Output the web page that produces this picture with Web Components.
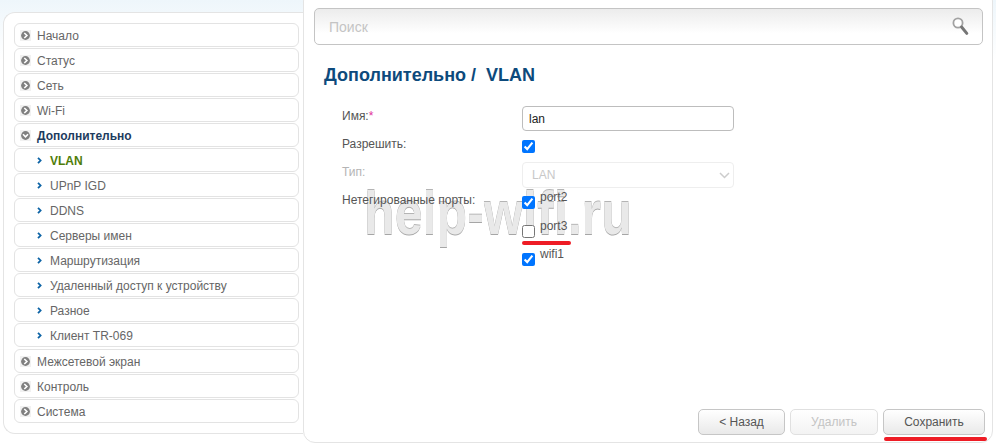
<!DOCTYPE html>
<html lang="ru">
<head>
<meta charset="utf-8">
<title>VLAN</title>
<style>
  html, body { margin: 0; height: 100%; }
  body {
    width: 996px;
    height: 448px;
    overflow: hidden;
    background: linear-gradient(180deg, #eef6fb 0, #ffffff 60px);
    font-family: "Liberation Sans", Arial, sans-serif;
  }
</style>
</head>
<body>
<router-page>
  <side-menu slot="menu">
    <menu-item icon="right">Начало</menu-item>
    <menu-item icon="right">Статус</menu-item>
    <menu-item icon="right">Сеть</menu-item>
    <menu-item icon="right">Wi-Fi</menu-item>
    <menu-item icon="down" open>Дополнительно</menu-item>
    <menu-item sub active>VLAN</menu-item>
    <menu-item sub>UPnP IGD</menu-item>
    <menu-item sub>DDNS</menu-item>
    <menu-item sub>Серверы имен</menu-item>
    <menu-item sub>Маршрутизация</menu-item>
    <menu-item sub>Удаленный доступ к устройству</menu-item>
    <menu-item sub>Разное</menu-item>
    <menu-item sub last>Клиент TR-069</menu-item>
    <menu-item icon="right">Межсетевой экран</menu-item>
    <menu-item icon="right">Контроль</menu-item>
    <menu-item icon="right">Система</menu-item>
  </side-menu>
  <main-panel slot="main">
    <search-box></search-box>
    <vlan-form></vlan-form>
    <action-bar></action-bar>
  </main-panel>
</router-page>

<script>
// общий каркас страницы
class RouterPage extends HTMLElement {
    constructor() {
        super();
        this.attachShadow({ mode: 'open' });
        this.shadowRoot.innerHTML = `
            <style>
                :host {
                    display: flex;
                    align-items: flex-start;
                    width: 996px;
                    height: 448px;
                    padding-left: 3px;
                    box-sizing: border-box;
                }
            </style>
            <slot name="menu"></slot>
            <slot name="main"></slot>
        `;
    }
}

class SideMenu extends HTMLElement {
    constructor() {
        super();
        this.attachShadow({ mode: 'open' });
        this.shadowRoot.innerHTML = `
            <style>
                :host {
                    display: flex;
                    flex-direction: column;
                    gap: 1px;
                    width: 300px;
                    height: 422px;
                    margin-top: 12px;
                    padding: 10px 4px 0 10px;
                    box-sizing: border-box;
                    background: #fff;
                    border: 1px solid #e4e4e4;
                    border-right: 0;
                    border-radius: 12px 0 0 12px;
                    flex: none;
                }
            </style>
            <slot></slot>
        `;
    }
}

class MenuItem extends HTMLElement {
    constructor() {
        super();
        this.attachShadow({ mode: 'open' });
    }

    connectedCallback() {
        const sub = this.hasAttribute('sub');
        const active = this.hasAttribute('active');
        const open = this.hasAttribute('open');
        const down = this.getAttribute('icon') === 'down';
        const color = active ? '#4f7d0a' : open ? '#1d3c5e' : '#666';
        const weight = active || open ? 'bold' : 'normal';
        const round = `
            <svg width="11" height="11" viewBox="0 0 11 11">
                <rect width="11" height="11" fill="#f1f1f1"/>
                <circle cx="5.5" cy="5.5" r="4.4" fill="#808080"/>
                <path d="${down ? 'M3 4.3 5.5 6.9 8 4.3' : 'M4.3 3 6.9 5.5 4.3 8'}" fill="none" stroke="#fff" stroke-width="1.6"/>
            </svg>`;
        const small = `
            <svg width="5" height="7" viewBox="0 0 5 7">
                <path d="M1 .8 3.6 3.5 1 6.2" fill="none" stroke="#0d63a5" stroke-width="1.8"/>
            </svg>`;
        this.shadowRoot.innerHTML = `
            <style>
                :host {
                    display: flex;
                    align-items: center;
                    height: 24px;
                    box-sizing: border-box;
                    padding: 1px 0 0 ${sub ? '22px' : '5px'};
                    margin-bottom: ${this.hasAttribute('last') ? '1px' : '0'};
                    background: #fff;
                    border: 1px solid #e3e3e3;
                    border-radius: 6px;
                    font: ${weight} 12px "Liberation Sans", Arial, sans-serif;
                    color: ${color};
                }
                svg { flex: none; }
                span { margin-left: ${sub ? '8px' : '6px'}; }
            </style>
            ${sub ? small : round}
            <span><slot></slot></span>
        `;
    }
}

class MainPanel extends HTMLElement {
    constructor() {
        super();
        this.attachShadow({ mode: 'open' });
        this.shadowRoot.innerHTML = `
            <style>
                :host {
                    display: flex;
                    flex-direction: column;
                    width: 690px;
                    height: 454px;
                    margin-top: -11px;
                    padding: 18px 9px 0 10px;
                    box-sizing: border-box;
                    background: #fff;
                    border: 1px solid #e4e4e4;
                    border-radius: 12px;
                    flex: none;
                    position: relative;
                }
            </style>
            <slot></slot>
        `;
    }
}

class SearchBox extends HTMLElement {
    constructor() {
        super();
        this.attachShadow({ mode: 'open' });
        this.shadowRoot.innerHTML = `
            <style>
                :host {
                    display: flex;
                    align-items: center;
                    justify-content: space-between;
                    height: 37px;
                    box-sizing: border-box;
                    padding: 0 13px 0 14px;
                    background: linear-gradient(180deg, #ececec 0, #fff 70%);
                    border: 1px solid #c4c4c4;
                    border-radius: 5px;
                    font: 14px "Liberation Sans", Arial, sans-serif;
                    color: #c4c4c4;
                }
            </style>
            <span>Поиск</span>
            <svg width="17" height="19" viewBox="0 0 17 19">
                <circle cx="6" cy="6" r="4.6" fill="#fff" stroke="#a2a2a2" stroke-width="1.8"/>
                <path d="M9.6 10 14.8 16.4" stroke="#767676" stroke-width="3" stroke-linecap="round"/>
            </svg>
        `;
    }
}

class VlanForm extends HTMLElement {
    constructor() {
        super();
        this.attachShadow({ mode: 'open' });
        this.shadowRoot.innerHTML = `
            <style>
                :host {
                    display: block;
                    position: relative;
                    font: 12px "Liberation Sans", Arial, sans-serif;
                    color: #555;
                }
                h1 {
                    margin: 0;
                    padding: 19px 0 0 10px;
                    font: bold 18px/22px "Liberation Sans", Arial, sans-serif;
                    color: #0d4a7c;
                    white-space: pre;
                }
                .grid {
                    position: relative;
                    display: grid;
                    grid-template-columns: 180px 212px;
                    grid-template-rows: 25px 31px 26px auto;
                    margin: 20px 0 0 28px;
                }
                label { line-height: 14px; }
                .l1, .l3 { padding-top: 3px; }
                .l2 { padding-top: 6px; }
                .l4 { padding-top: 5px; }
                .star { color: #e0309a; }
                .off { color: #b4b4b4; }
                .input {
                    display: flex;
                    align-items: center;
                    height: 25px;
                    box-sizing: border-box;
                    padding-left: 6px;
                    border: 1px solid #bdbdbd;
                    border-radius: 4px;
                    color: #222;
                }
                .select {
                    display: flex;
                    align-items: center;
                    justify-content: space-between;
                    height: 26px;
                    box-sizing: border-box;
                    padding: 0 3px 0 9px;
                    border: 1px solid #eee;
                    border-radius: 4px;
                    color: #c8c8c8;
                }
                input {
                    width: 13px;
                    height: 13px;
                    margin: 0;
                    accent-color: #0075ff;
                    display: block;
                }
                .allow { padding-top: 9px; }
                .port { position: relative; height: 28.5px; }
                .port input { position: absolute; left: 0; top: 8px; }
                .port span { position: absolute; left: 18px; top: 2px; }
                .wm {
                    position: absolute;
                    left: 50px;
                    top: 133px;
                    font: bold 62px/70px "Liberation Sans", Arial, sans-serif;
                    transform: scaleX(.81);
                    transform-origin: left top;
                    color: #e9e9e9;
                    text-shadow: 0 1px 0 #a6a6a6, 0 -1px 0 #b4b4b4;
                    white-space: nowrap;
                    pointer-events: none;
                }
                .mark {
                    position: absolute;
                    left: 208px;
                    top: 196px;
                    width: 49px;
                    height: 4px;
                    border-radius: 2px;
                    background: #ee1c25;
                }
            </style>
            <h1>Дополнительно /  VLAN</h1>
            <div class="wm">help-wifi.ru</div>
            <div class="grid">
                <label class="l1">Имя:<span class="star">*</span></label>
                <div class="input">lan</div>
                <label class="l2">Разрешить:</label>
                <div class="allow"><input type="checkbox" checked></div>
                <label class="l3 off">Тип:</label>
                <div class="select">LAN
                    <svg width="11" height="7" viewBox="0 0 11 7"><path d="M1 1 5.5 5.5 10 1" fill="none" stroke="#ccc" stroke-width="1.5"/></svg>
                </div>
                <label class="l4">Нетегированные порты:</label>
                <div>
                    <div class="port"><input type="checkbox" checked><span>port2</span></div>
                    <div class="port"><input type="checkbox"><span>port3</span></div>
                    <div class="port"><input type="checkbox" checked><span>wifi1</span></div>
                </div>
            </div>
            <div class="mark"></div>
        `;
    }
}

class ActionBar extends HTMLElement {
    constructor() {
        super();
        this.attachShadow({ mode: 'open' });
        this.shadowRoot.innerHTML = `
            <style>
                :host {
                    position: absolute;
                    right: 7px;
                    top: 419px;
                    display: flex;
                    gap: 5px;
                    font: 12px "Liberation Sans", Arial, sans-serif;
                }
                button {
                    height: 26px;
                    padding: 0;
                    background: linear-gradient(180deg, #fff 0, #e9e9e9 100%);
                    border: 1px solid #c6c6c6;
                    border-radius: 5px;
                    font: inherit;
                    color: #555;
                }
                .back { width: 87px; }
                .del { width: 88px; color: #c4c4c4; background: linear-gradient(180deg, #fff 0, #f3f3f3 100%); border-color: #e0e0e0; }
                .save { width: 102px; }
                .mark {
                    position: absolute;
                    right: -2px;
                    top: 28px;
                    width: 103px;
                    height: 4px;
                    border-radius: 2px;
                    background: #ee1c25;
                }
            </style>
            <button class="back">&lt; Назад</button>
            <button class="del" disabled>Удалить</button>
            <button class="save">Сохранить</button>
            <div class="mark"></div>
        `;
    }
}

customElements.define('router-page', RouterPage);
customElements.define('side-menu', SideMenu);
customElements.define('menu-item', MenuItem);
customElements.define('main-panel', MainPanel);
customElements.define('search-box', SearchBox);
customElements.define('vlan-form', VlanForm);
customElements.define('action-bar', ActionBar);
</script>
</body>
</html>
